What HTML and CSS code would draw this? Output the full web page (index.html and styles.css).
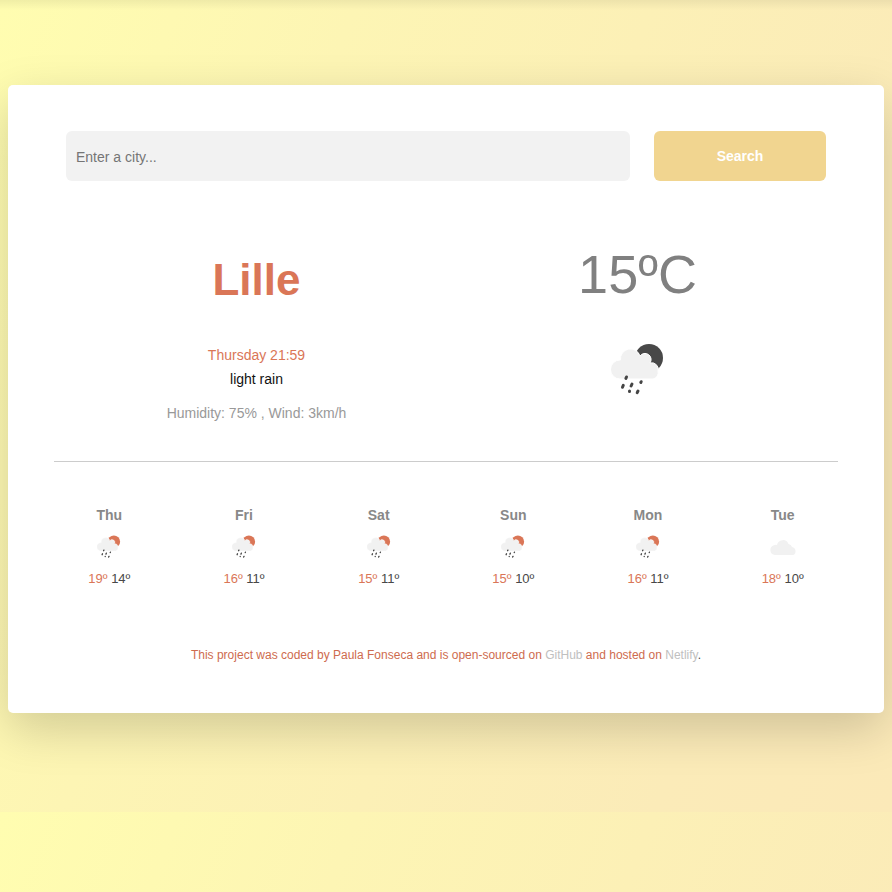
FILE: index.html
```html
<!DOCTYPE html>
<html lang="en">
<head>
<meta charset="utf-8">
<meta name="viewport" content="width=device-width, initial-scale=1">
<title>Weather</title>
<link rel="stylesheet" href="styles.css">
</head>
<body>
<svg class="defs" aria-hidden="true">
  <symbol id="cloud" viewBox="0 0 28 24">
    <path d="M6 20a5 5 0 0 1-1-9.800 5 5 0 0 1 3-.2 6 6 0 0 1 11.500-1 4 4 0 0 1 3.500 3 4.200 4.200 0 0 1 1 8z"/>
  </symbol>
  <symbol id="rain" viewBox="0 0 54 54">
    <circle class="sun" cx="38" cy="15" r="14"/>
    <path class="edge" d="M9 36a9.500 9.500 0 0 1 0-19h.5a10 10 0 0 1 19.500-4 6 6 0 0 1 10 7 6.500 6.500 0 0 1 8 8 6.500 6.500 0 0 1-5 8z"/>
    <path class="drops" d="M15.500 34l-.6 1.400M12.300 42.300l-.8 2M21 41l-.9 2M30.200 38.700l-.4.800M18.500 48v.4M27 48l-.8 1.600"/>
  </symbol>
</svg>
<main class="card">
  <form class="search" onsubmit="return false">
    <input class="search-input" type="text" placeholder="Enter a city..." aria-label="City">
    <button class="search-button" type="submit">Search</button>
  </form>
  <section class="current">
    <div class="place">
      <h1 class="city">Lille</h1>
      <p class="time">Thursday 21:59</p>
      <p class="description">light rain</p>
      <p class="details">Humidity: 75% , Wind: 3km/h</p>
    </div>
    <div class="reading">
      <p class="temperature">15ºC</p>
      <svg class="icon-large" role="img" aria-label="light rain"><use href="#rain"/></svg>
    </div>
  </section>
  <section class="forecast">
    <div class="day"><h2>Thu</h2><svg class="icon"><use href="#rain"/></svg><p><span class="max">19º</span> 14º</p></div>
    <div class="day"><h2>Fri</h2><svg class="icon"><use href="#rain"/></svg><p><span class="max">16º</span> 11º</p></div>
    <div class="day"><h2>Sat</h2><svg class="icon"><use href="#rain"/></svg><p><span class="max">15º</span> 11º</p></div>
    <div class="day"><h2>Sun</h2><svg class="icon"><use href="#rain"/></svg><p><span class="max">15º</span> 10º</p></div>
    <div class="day"><h2>Mon</h2><svg class="icon"><use href="#rain"/></svg><p><span class="max">16º</span> 11º</p></div>
    <div class="day"><h2>Tue</h2><svg class="icon cloudy"><use href="#cloud"/></svg><p><span class="max">18º</span> 10º</p></div>
  </section>
  <footer class="credit">This project was coded by Paula Fonseca and is open-sourced on <a href="#">GitHub</a> and hosted on <a href="#">Netlify</a><span class="stop">.</span></footer>
</main>
</body>
</html>
```
FILE: styles.css
```css
* {
  box-sizing: border-box;
}

body {
  margin: 0;
  min-height: 100vh;
  padding: 85px 8px;
  background:
    linear-gradient(rgba(0, 0, 0, 0.06), transparent) top / 100% 10px no-repeat,
    linear-gradient(110deg, #fffdb0 0%, #fdf5b4 30%, #fbebb8 80%, #fbe9b8 100%) top / 100% 812px;
  font-family: "Liberation Sans", Arial, sans-serif;
  font-size: 14px;
  line-height: 24px;
  color: #111;
}

h1,
h2,
p {
  margin: 0;
}

.defs {
  position: absolute;
  width: 0;
  height: 0;
}

.card {
  padding: 46px;
  background: #fff;
  border-radius: 5px;
  box-shadow: 0 16px 48px rgba(0, 0, 0, 0.175);
}

.search {
  display: grid;
  grid-template-columns: 3fr 1fr;
}

.search-input,
.search-button {
  min-width: 0;
  height: 50px;
  margin: 0 12px;
  border: 0;
  border-radius: 6px;
  font-family: inherit;
  font-size: 14px;
}

.search-input {
  padding: 2px 10px 0;
  background: #f2f2f2;
}

.search-input::placeholder {
  color: #757575;
  opacity: 1;
}

.search-button {
  background: #f1d590;
  color: #fff;
  font-weight: 700;
}

.current {
  display: grid;
  grid-template-columns: 1fr 1fr;
  padding: 60px 10px 36px 12px;
  border-bottom: 1px solid #ccc;
  text-align: center;
}

.city {
  padding: 9px 0 33px;
  font-size: 44px;
  line-height: 60px;
  color: #da7657;
}

.time {
  color: #da7657;
}

.details {
  margin-top: 10px;
  color: #999;
}

.temperature {
  font-size: 54px;
  line-height: 66px;
  color: #808080;
}

.icon-large {
  width: 54px;
  height: 54px;
  margin-top: 36px;
  color: #484848;
}

.sun {
  fill: currentColor;
}

.edge {
  fill: #f1f1f1;
  stroke: #fff;
  stroke-width: 1;
}

.drops {
  fill: none;
  stroke: #444;
  stroke-width: 3;
  stroke-linecap: round;
}

.forecast {
  display: grid;
  grid-template-columns: repeat(6, 1fr);
  margin: 41px -12px 0;
  text-align: center;
}

.day {
  display: flex;
  flex-direction: column;
  align-items: center;
  font-size: 13px;
  color: #484848;
}

.day h2 {
  font-size: 14px;
  line-height: 24px;
  color: #888;
}

.icon {
  width: 24px;
  height: 24px;
  margin: 8px 0;
  color: #da7657;
}

.cloudy {
  width: 28px;
  fill: #f1f1f1;
}

.max {
  color: #da7657;
}

.credit {
  margin-top: 52px;
  font-size: 12px;
  line-height: 24px;
  text-align: center;
  color: #ce6b4e;
}

.credit a {
  color: #c0c0c0;
  text-decoration: none;
}

.stop {
  color: #444;
}
```
